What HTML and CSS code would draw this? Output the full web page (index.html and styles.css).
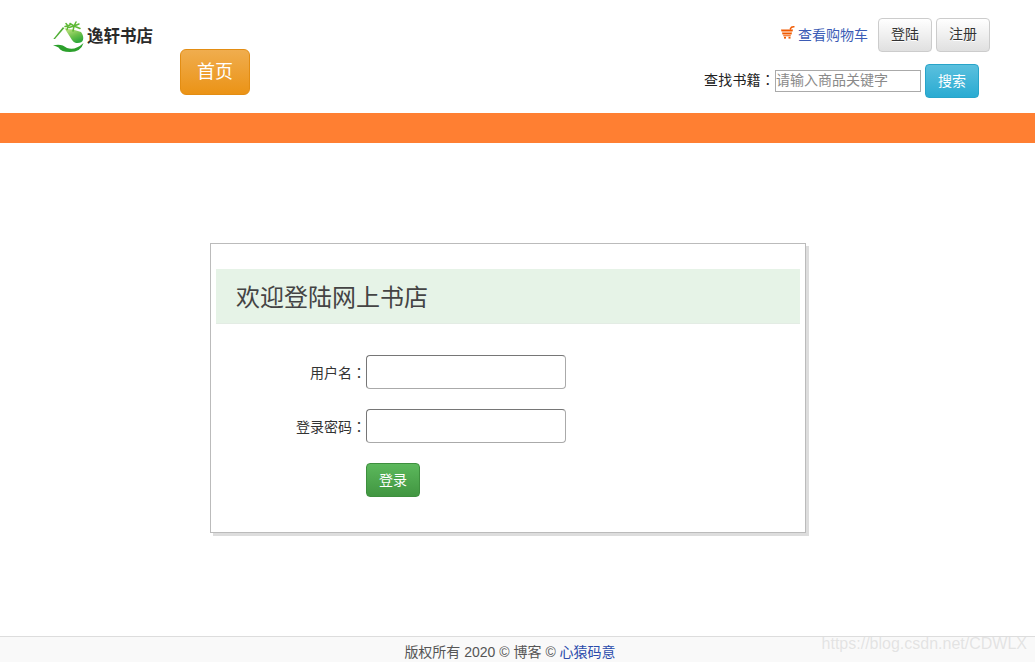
FILE: index.html
```html
<!DOCTYPE html>
<html lang="zh-CN">
<head>
<meta charset="utf-8">
<title>逸轩书店</title>
<link rel="stylesheet" href="styles.css">
</head>
<body>
<div class="page">
  <header class="header">
    <a class="logo">
      <svg class="logo-mark" width="32" height="32" viewBox="0 0 32 32">
        <defs><linearGradient id="g" x1="0.1" y1="0" x2="0.6" y2="1"><stop offset="0" stop-color="#cfe88a"/><stop offset="0.6" stop-color="#6cc04a"/><stop offset="1" stop-color="#2fa83a"/></linearGradient></defs>
        <path d="M0.3 18 L10 6 L11.2 7.2 L2 18 Z" fill="#4fae34"/>
        <path d="M11 6.5 L14 8 L20 8.5 L28 11 Q31 15 30 19 Q29 22.5 23 22 Q21 22 19 19 Z" fill="url(#g)"/>
        <path d="M20 10 L21 5 M21 5 L16 6.5 M21 5 L17 2.5 M21 5 L23 1 M21 5 L26 3 M21 5 L27 7.5 M14 8.5 L15 5 M15 5 L12 5.5 M15 5 L13 2.5 M15 5 L17.5 3.5" fill="none" stroke="#5fb936" stroke-width="1.5" stroke-linecap="round"/>
        <path d="M0 24.5 Q8 22 14 27 Q22 30 30.5 22 Q28 31 17 31 Q8 31 5.5 26.5 Q3 25 0 24.5 Z" fill="#2ca02c"/>
      </svg>
      <span class="logo-text">逸轩书店</span>
    </a>
    <a class="nav-home">首页</a>
    <div class="tools">
      <div class="tools-top">
        <a class="cart">
          <svg class="cart-icon" width="14" height="14" viewBox="0 0 14 14">
            <path d="M9 3.5 L10.5 1.2 L13.5 0.5" fill="none" stroke="#f15a00" stroke-width="1.4"/>
            <path d="M0 3.4 H12 L11.5 5.6 H0.5 Z M1 6.6 H11 L10.5 8.4 H1.5 Z M2.2 9.2 H9.8 V10.3 H2.2 Z" fill="#f15a00"/>
            <rect x="3" y="10.8" width="2" height="1.8" fill="#f15a00"/>
            <rect x="7.5" y="10.8" width="2" height="1.8" fill="#f15a00"/>
          </svg>
          <span class="cart-text">查看购物车</span>
        </a>
        <a class="btn btn-default">登陆</a>
        <a class="btn btn-default">注册</a>
      </div>
      <form class="search">
        <label class="search-label">查找书籍<span class="colon" lang="zh-TW">：</span></label>
        <input class="search-input" type="text" placeholder="请输入商品关键字">
        <button class="btn btn-info" type="button">搜索</button>
      </form>
    </div>
  </header>
  <div class="band"></div>
  <main class="main">
    <section class="card">
      <h1 class="card-title">欢迎登陆网上书店</h1>
      <form class="login">
        <div class="row">
          <label class="row-label">用户名<span class="colon" lang="zh-TW">：</span></label>
          <input class="field" type="text">
        </div>
        <div class="row">
          <label class="row-label">登录密码<span class="colon" lang="zh-TW">：</span></label>
          <input class="field" type="password">
        </div>
        <div class="row">
          <span class="row-label"></span>
          <button class="btn btn-success" type="button">登录</button>
        </div>
      </form>
    </section>
  </main>
  <footer class="footer">版权所有 2020 © 博客 © <a class="footer-link">心猿码意</a></footer>
  <div class="watermark">https://blog.csdn.net/CDWLX</div>
</div>
</body>
</html>
```
FILE: styles.css
```css
* { box-sizing: border-box; }
html, body { margin: 0; height: 100%; }
body {
  font-family: "Liberation Sans", "Noto Sans CJK SC", sans-serif;
  font-size: 14px;
  color: #333;
  background: #fff;
  overflow: hidden;
}
.page {
  position: relative;
  height: 662px;
  display: flex;
  flex-direction: column;
}
.header {
  height: 113px;
  flex: none;
  display: flex;
  align-items: flex-start;
  padding: 0 45px 0 53px;
}
.logo {
  display: flex;
  align-items: center;
  width: 127px;
  margin-top: 20px;
}
.logo-mark { flex: none; margin-right: 2px; }
.logo-text {
  font-family: "Liberation Serif", "Noto Sans CJK SC", serif;
  font-size: 16.5px;
  font-weight: 700;
  color: #2a2a2a;
  line-height: 32px;
  padding-top: 1px;
  white-space: nowrap;
}
.nav-home {
  width: 70px;
  height: 46px;
  margin-top: 49px;
  border: 1px solid #e38d13;
  border-radius: 6px;
  background: linear-gradient(#f0ad4e, #eb9316);
  color: #fff;
  font-size: 18px;
  line-height: 44px;
  text-align: center;
}
.tools {
  margin-left: auto;
  display: flex;
  flex-direction: column;
  align-items: flex-end;
  padding-top: 18px;
}
.tools-top {
  display: flex;
  align-items: center;
  gap: 4px;
  height: 34px;
}
.cart {
  display: flex;
  align-items: center;
  margin-right: 6px;
  color: #3b5bb5;
  font-size: 14px;
}
.cart-text { padding-bottom: 3px; }
.cart-icon { margin-right: 3px; margin-top: -5px; }
.colon { font-family: "Noto Sans CJK TC", sans-serif; }
.btn {
  display: block;
  height: 34px;
  width: 54px;
  padding: 0;
  border: 1px solid #ccc;
  border-radius: 4px;
  font-family: inherit;
  font-size: 14px;
  line-height: 30px;
  text-align: center;
}
.btn-default {
  background: linear-gradient(#fff, #e0e0e0);
  color: #333;
  text-shadow: 0 1px 0 #fff;
}
.btn-info {
  background: linear-gradient(#5bc0de, #2aabd2);
  border-color: #28a4c9;
  color: #fff;
}
.btn-success {
  background: linear-gradient(#5cb85c, #419641);
  border-color: #3e8f3e;
  color: #fff;
}
.search {
  display: flex;
  align-items: center;
  margin: 12px 11px 0 0;
}
.search-label { color: #222; font-size: 14px; padding-bottom: 5px; letter-spacing: 0.2px; }
.search-input {
  width: 146px;
  height: 22px;
  margin-right: 4px;
  padding: 0 0 3px;
  border: 1px solid #aaa;
  font-family: inherit;
  font-size: 14px;
  color: #333;
}
.search-input::placeholder { color: #8a8a8a; opacity: 1; }
.band {
  height: 30px;
  flex: none;
  background: #ff7f32;
}
.main {
  flex: 1;
  padding-top: 100px;
}
.card {
  width: 596px;
  height: 290px;
  margin-left: 210px;
  padding: 25px 5px 0;
  border: 1px solid #bbb;
  box-shadow: 3px 3px 0 #ddd;
  background: #fff;
}
.card-title {
  margin: 0;
  height: 55px;
  padding-left: 20px;
  background: #e6f3e7;
  border-bottom: 1px solid #e3ece4;
  font-size: 24px;
  font-weight: 400;
  line-height: 58px;
  color: #444;
}
.login {
  display: flex;
  flex-direction: column;
  gap: 20px;
  padding-top: 31px;
}
.row {
  display: flex;
  align-items: center;
  height: 34px;
}
.row-label {
  width: 150px;
  text-align: right;
  color: #333;
  font-size: 14px;
}
.field {
  width: 200px;
  height: 34px;
  padding: 0 6px;
  border: 1px solid #aaa;
  border-top-color: #767676;
  border-left-color: #767676;
  border-radius: 4px;
  background: #fff;
}
.footer {
  height: 26px;
  flex: none;
  padding-right: 15px;
  border-top: 1px solid #ddd;
  background: #f9f9f9;
  color: #555;
  font-size: 14px;
  line-height: 30px;
  text-align: center;
  white-space: nowrap;
}
.footer-link { color: #2a4bab; }
.watermark {
  position: absolute;
  right: 8px;
  bottom: 6px;
  font-size: 16px;
  line-height: 24px;
  color: rgba(200, 200, 200, 0.45);
}
```
